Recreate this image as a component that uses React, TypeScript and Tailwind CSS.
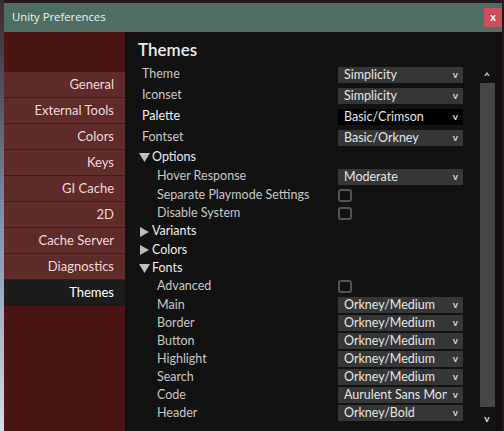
import React from "react";

const sideItems = [
  "General",
  "External Tools",
  "Colors",
  "Keys",
  "GI Cache",
  "2D",
  "Cache Server",
  "Diagnostics",
];

function Dropdown({ value, dark }: { value: string; dark?: boolean }) {
  return (
    <div
      className={`relative w-[125px] h-[16px] flex items-center pl-[6px] text-[12.5px] text-[#e4e4e4] ${
        dark ? "bg-black" : "bg-[#363636]"
      }`}
    >
      <span className="w-[103px] h-[16px] leading-[16px] overflow-hidden whitespace-nowrap">{value}</span>
      <span className="absolute right-[5px] top-0 leading-[15px] text-[10px] font-bold text-[#d8d8d8]">v</span>
    </div>
  );
}

function Checkbox() {
  return <div className="w-[14px] h-[13px] border-2 border-[#545454] rounded-[3px]" />;
}

function Triangle({ open }: { open: boolean }) {
  return open ? (
    <svg width="11" height="9" viewBox="0 0 11 9" className="mr-[2px]">
      <path d="M0 0 H11 L5.5 9 Z" fill="#bdbdbd" />
    </svg>
  ) : (
    <svg width="11" height="10" viewBox="0 0 11 10" className="mr-[2px]">
      <path d="M1 0 L10 5 L1 10 Z" fill="#bdbdbd" />
    </svg>
  );
}

function Row({
  label,
  h,
  indent,
  bright,
  children,
}: {
  label: string;
  h: string;
  indent?: boolean;
  bright?: boolean;
  children?: React.ReactNode;
}) {
  return (
    <div className={`flex items-center ${h}`}>
      <span
        className={`shrink-0 w-[196px] ${indent ? "pl-[15px]" : ""} ${
          bright ? "text-[#f2f2f2]" : "text-[#c6c6c6]"
        }`}
      >
        {label}
      </span>
      {children}
    </div>
  );
}

function Section({ label, open, h }: { label: string; open: boolean; h: string }) {
  return (
    <div className={`flex items-center ${h} -ml-[3px] text-[#ececec]`}>
      <Triangle open={open} />
      <span>{label}</span>
    </div>
  );
}

export default function App() {
  return (
    <div
      className="w-[504px] h-[431px] flex bg-[#261a1c] overflow-hidden"
      style={{ fontFamily: "Lato, 'Noto Sans', sans-serif" }}
    >
      <div className="w-[4px] h-full bg-gradient-to-b from-[#3a2a2e] via-[#7d8ea8] to-[#d6dde6]" />
      <div className="flex-1 flex flex-col pt-[3px]">
        <div className="h-[29px] bg-[#4f6e63] flex items-center justify-between pl-[8px] mr-[2px]">
          <span className="text-[11.3px] text-[#eef2f0]" style={{ fontFamily: "'Open Sans', sans-serif" }}>
            Unity Preferences
          </span>
          <div className="w-[18px] h-[19px] bg-[#c9505a] flex items-center justify-center text-[11px] font-bold text-white leading-none pb-[2px]">
            x
          </div>
        </div>
        <div className="flex-1 flex mr-[2px]">
          <div className="w-[121px] bg-[#4b1515] pt-[40px] flex flex-col">
            {sideItems.map((s) => (
              <div
                key={s}
                className="h-[26px] bg-[#5f2b2b] border-b border-[#4a1717] flex items-center justify-end pr-[11px] text-[13px] text-[#ecdada]"
              >
                {s}
              </div>
            ))}
            <div className="h-[26px] bg-[#1c1c1c] flex items-center justify-end pr-[11px] text-[13px] text-white">
              Themes
            </div>
          </div>
          <div className="flex-1 bg-[#121212] flex">
            <div className="w-[353px] pl-[17px] pt-[8px] text-[12.5px]">
              <div className="h-[20px] -ml-[4px] text-[17px] leading-[20px] font-semibold text-[#ececec]">Themes</div>
              <div className="h-[4px]" />
              <Row label="Theme" h="h-[21px]">
                <Dropdown value="Simplicity" />
              </Row>
              <Row label="Iconset" h="h-[21px]">
                <Dropdown value="Simplicity" />
              </Row>
              <Row label="Palette" h="h-[21px]" bright>
                <Dropdown value="Basic/Crimson" dark />
              </Row>
              <Row label="Fontset" h="h-[21px]">
                <Dropdown value="Basic/Orkney" />
              </Row>
              <Section label="Options" open h="h-[19px]" />
              <Row label="Hover Response" h="h-[19px]" indent>
                <Dropdown value="Moderate" />
              </Row>
              <Row label="Separate Playmode Settings" h="h-[18px]" indent>
                <Checkbox />
              </Row>
              <Row label="Disable System" h="h-[18px]" indent>
                <Checkbox />
              </Row>
              <Section label="Variants" open={false} h="h-[19px]" />
              <Section label="Colors" open={false} h="h-[18px]" />
              <Section label="Fonts" open h="h-[18px]" />
              <Row label="Advanced" h="h-[19px]" indent>
                <Checkbox />
              </Row>
              <Row label="Main" h="h-[18px]" indent>
                <Dropdown value="Orkney/Medium" />
              </Row>
              <Row label="Border" h="h-[18px]" indent>
                <Dropdown value="Orkney/Medium" />
              </Row>
              <Row label="Button" h="h-[18px]" indent>
                <Dropdown value="Orkney/Medium" />
              </Row>
              <Row label="Highlight" h="h-[18px]" indent>
                <Dropdown value="Orkney/Medium" />
              </Row>
              <Row label="Search" h="h-[18px]" indent>
                <Dropdown value="Orkney/Medium" />
              </Row>
              <Row label="Code" h="h-[18px]" indent>
                <Dropdown value="Aurulent Sans Mono" />
              </Row>
              <Row label="Header" h="h-[18px]" indent>
                <Dropdown value="Orkney/Bold" />
              </Row>
            </div>
            <div className="w-[18px] flex flex-col items-center pt-[36px] text-[#e0e0e0]">
              <span className="h-[15px] text-[10px] font-bold leading-[15px]">^</span>
              <div className="w-[15px] h-[324px] bg-[#464646]" />
              <span className="h-[14px] text-[10px] font-bold leading-[14px] mt-[4px]">v</span>
            </div>
          </div>
        </div>
      </div>
    </div>
  );
}
